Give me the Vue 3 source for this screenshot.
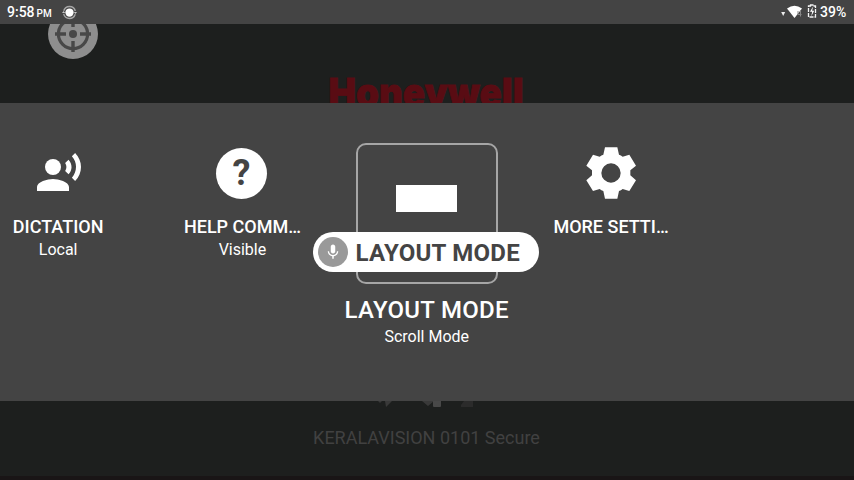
<script setup>
const items = [
  { id: 'dictation', title: 'DICTATION', sub: 'Local' },
  { id: 'help', title: 'HELP COMM…', sub: 'Visible' },
  { id: 'layout', title: 'LAYOUT MODE', sub: 'Scroll Mode', active: true },
  { id: 'settings', title: 'MORE SETTI…', sub: '' },
]
</script>

<template>
  <div class="screen">
    <header class="status">
      <span class="time">9:58</span><span class="pm">PM</span>
      <svg class="sync" viewBox="0 0 16 16">
        <circle cx="8" cy="8" r="6.4" fill="none" stroke="#a5a5a5" stroke-width="1.5" stroke-dasharray="16 3.5" stroke-dashoffset="-2" />
        <circle cx="8" cy="8" r="4.4" fill="#fff" />
        <path d="M0 8.5h3.4L1.7 6.3zM16 7.5h-3.4l1.7 2.2z" fill="#c8c8c8" />
      </svg>
      <span class="fill"></span>
      <svg class="signals" viewBox="0 0 38 18">
        <path d="M.2 9h4L2.200 13z" fill="#eee" />
        <path d="M6 5.500Q13.500 0 21 5.500L13.500 15z" fill="#fff" />
        <path d="M17 8v3.500h3.500M19.500 7.500v6" fill="none" stroke="#888" stroke-width="1" />
        <path d="M29.500 3V2h3v1h2v11h-7v-11z" fill="none" stroke="#f4f4f4" stroke-width="1.300" stroke-dasharray="4 1" />
        <path d="M32 3.500l-3 5.300h2.200l-1 4.700 3-5.700h-2z" fill="#fff" />
      </svg>
      <span class="battery">39%</span>
    </header>

    <section class="above">
      <svg class="target" viewBox="0 0 50 50">
        <circle cx="25" cy="25" r="25" fill="#8e8e8e" />
        <g stroke="#484848" fill="none">
          <circle cx="25" cy="25" r="14.6" stroke-width="3.2" />
          <path d="M25 7v11M25 32v11M7 25h11M32 25h11" stroke-width="3.4" />
        </g>
        <circle cx="25" cy="25" r="4" fill="#484848" />
      </svg>
      <svg class="brand" viewBox="0 0 200 40">
        <text x="-0.5" y="33" textLength="195" lengthAdjust="spacingAndGlyphs">Honeywell</text>
      </svg>
    </section>

    <main class="panel">
      <div v-for="item in items" :key="item.id" class="item" :class="{ active: item.active }">
        <div class="icon" :class="item.id">
          <svg v-if="item.id === 'dictation'" width="48" height="48" viewBox="0 0 24 24" fill="#fff">
            <circle cx="9" cy="9" r="4" />
            <path d="M9 15c-2.67 0-8 1.34-8 4v2h16v-2c0-2.66-5.330-4-8-4zm7.760-9.640l-1.680 1.690c.840 1.180.840 2.710 0 3.890l1.680 1.690c2.020-2.020 2.020-5.070 0-7.270zM20.070 2l-1.630 1.630c2.770 3.020 2.770 7.560 0 10.740L20.070 16c3.900-3.890 3.910-9.950 0-14z" />
          </svg>
          <span v-else-if="item.id === 'help'" class="question">?</span>
          <svg v-else-if="item.id === 'settings'" width="50" height="52" viewBox="0 0 150 156">
            <path fill="#fff" fill-rule="evenodd" d="M57 1h37l5 22q6 2 11 6l20-6 20 33-17 14v15l17 15-20 32-20-6q-5 4-11 6l-5 23H57l-5-23q-6-2-11-6l-20 6L1 100l17-15V70L1 56l20-33 20 6q5-4 11-6zM75 49a29 29 0 1 0 0 58a29 29 0 1 0 0-58z" />
          </svg>
          <div v-else class="tile"><div class="block"></div></div>
        </div>
        <div class="title">{{ item.title }}</div>
        <div class="sub">{{ item.sub }}</div>
        <div v-if="item.active" class="bubble">
          <span class="mic">
            <svg width="18" height="18" viewBox="0 0 24 24" fill="#fff">
              <path d="M12 14c1.660 0 3-1.340 3-3V5c0-1.660-1.340-3-3-3S9 3.340 9 5v6c0 1.660 1.340 3 3 3zm5.300-3c0 3-2.540 5.100-5.300 5.100S6.700 14 6.700 11H5c0 3.410 2.720 6.230 6 6.720V21h2v-3.280c3.280-.480 6-3.300 6-6.720z" />
            </svg>
          </span>
          <span class="command">LAYOUT MODE</span>
        </div>
      </div>
    </main>

    <footer class="below">
      <svg class="remnants" viewBox="0 0 130 8">
        <path d="M16 0h4l-2 2zM23 0h7l-6 6zM60 0h12l-6 5z" fill="#393939" />
        <path d="M71 0h8v5q0 1-1 1h-6q-1 0-1-1z" fill="#484848" />
        <path d="M102 0h9v6h-12v-2z" fill="#2b2b2b" />
      </svg>
      <div class="network">KERALAVISION 0101 Secure</div>
      <div class="edge"></div>
    </footer>
  </div>
</template>

<style>
body {
  margin: 0;
  overflow: hidden;
}
</style>

<style scoped>
.screen {
  width: 854px;
  height: 480px;
  display: flex;
  flex-direction: column;
  overflow: hidden;
  background: #1d1f1e;
  color: #fff;
  font-family: Roboto, "Liberation Sans", sans-serif;
}
.status {
  height: 24px;
  flex: none;
  box-sizing: border-box;
  padding: 0 8px 0 7px;
  display: flex;
  align-items: center;
  background: #444;
  font-weight: 500;
  font-size: 14px;
  line-height: 24px;
}
.pm {
  font-size: 10px;
  padding: 3px 0 0 2px;
}
.sync {
  width: 15px;
  height: 15px;
  margin-left: 10px;
}
.fill {
  flex: 1;
}
.signals {
  width: 38px;
  height: 18px;
  margin-right: 1px;
}
.battery {
  width: 26px;
  white-space: nowrap;
}
.above {
  height: 79px;
  flex: none;
  overflow: hidden;
  display: flex;
  align-items: flex-start;
}
.target {
  width: 50px;
  height: 50px;
  flex: none;
  margin: -15px 0 0 48px;
}
.brand {
  width: 200px;
  height: 40px;
  flex: none;
  margin: 50px 0 0 231px;
}
.brand text {
  font-family: Inter, sans-serif;
  font-weight: 900;
  font-size: 40px;
  fill: #590c13;
  stroke: #590c13;
  stroke-width: 0.8px;
}
.panel {
  height: 298px;
  flex: none;
  box-sizing: border-box;
  padding-top: 40px;
  display: grid;
  grid-template-columns: repeat(4, 184.3px);
  margin-left: -34px;
  width: 888px;
  background: #444;
}
.item {
  position: relative;
  text-align: center;
}
.icon {
  height: 60px;
  display: flex;
  align-items: center;
  justify-content: center;
}
.icon.dictation {
  padding-left: 2px;
}
.icon.help {
  padding-right: 2px;
}
.question {
  width: 51px;
  height: 51px;
  border-radius: 50%;
  background: #fff;
  color: #444;
  font-size: 36px;
  line-height: 51px;
  font-weight: 700;
}
.title {
  margin-top: 13px;
  font-size: 18px;
  line-height: 22px;
  font-weight: 500;
}
.sub {
  margin-top: 1px;
  font-size: 16px;
  line-height: 22px;
}
.active .icon {
  height: 141px;
}
.tile {
  width: 142px;
  height: 141px;
  box-sizing: border-box;
  border: 2px solid #a6a6a6;
  border-radius: 10px;
  padding: 40px 0 0 38px;
}
.block {
  width: 61px;
  height: 27px;
  background: #fff;
}
.active .title {
  margin-top: 12px;
  font-size: 24px;
  line-height: 28px;
  letter-spacing: 0.3px;
}
.active .sub {
  line-height: 24px;
}
.bubble {
  position: absolute;
  top: 89px;
  left: -22px;
  width: 226px;
  height: 40px;
  box-sizing: border-box;
  padding-left: 5px;
  display: flex;
  align-items: center;
  gap: 8px;
  border-radius: 20px;
  background: #fff;
  color: #444;
  font-size: 24px;
  font-weight: 700;
  letter-spacing: 0.25px;
  white-space: nowrap;
}
.command {
  padding-top: 2px;
}
.mic {
  width: 30px;
  height: 30px;
  flex: none;
  border-radius: 50%;
  background: #999;
  display: flex;
  align-items: center;
  justify-content: center;
}
.below {
  height: 79px;
  display: flex;
  flex-direction: column;
  align-items: center;
}
.remnants {
  width: 130px;
  height: 8px;
}
.network {
  margin: 18px 1px 0 0;
  font-size: 18px;
  line-height: 22px;
  color: #414141;
}
.edge {
  align-self: stretch;
  margin-top: auto;
  height: 4px;
  background: #191516;
}
</style>
